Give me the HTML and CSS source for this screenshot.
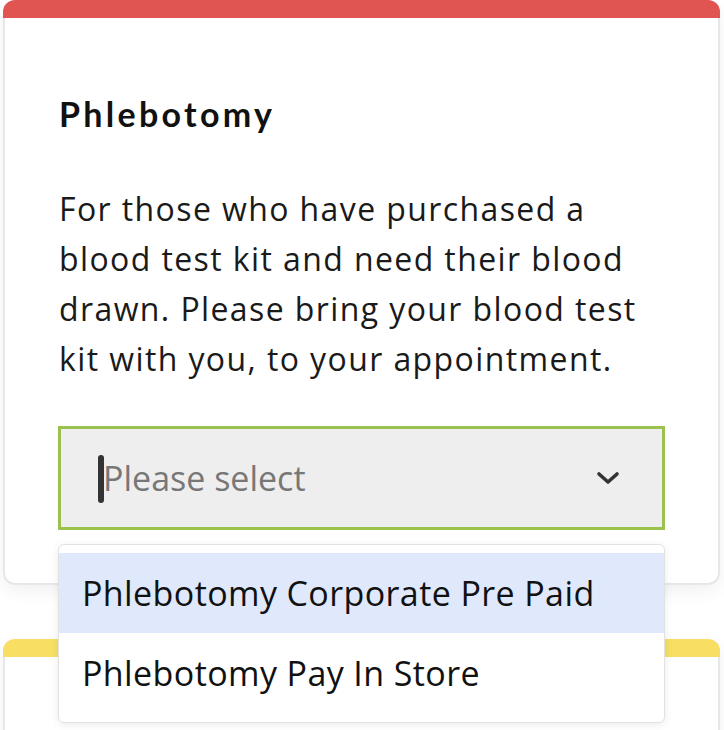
FILE: index.html
```html
<!DOCTYPE html>
<html lang="en">
<head>
<meta charset="utf-8">
<title>Phlebotomy</title>
<link rel="stylesheet" href="styles.css">
</head>
<body>
<div class="page">
  <section class="card">
    <div class="card-bar red"></div>
    <div class="card-body">
      <h2 class="card-title">Phlebotomy</h2>
      <p class="card-text">For those who have purchased a blood test kit and need their blood drawn. Please bring your blood test kit with you, to your appointment.</p>
      <div class="select-wrap">
        <div class="select">
          <span class="caret"></span>
          <span class="placeholder">Please select</span>
          <svg class="chevron" width="24" height="14" viewBox="0 0 24 14"><polyline points="3,3 12,11 21,3" fill="none" stroke="#333" stroke-width="3.6" stroke-linecap="round" stroke-linejoin="round"/></svg>
        </div>
        <ul class="menu">
          <li class="option active">Phlebotomy Corporate Pre Paid</li>
          <li class="option">Phlebotomy Pay In Store</li>
        </ul>
      </div>
    </div>
  </section>
  <section class="card card-next">
    <div class="card-bar yellow"></div>
  </section>
</div>
</body>
</html>
```
FILE: styles.css
```css
html, body {
  margin: 0;
  padding: 0;
  background: #ffffff;
}
body {
  font-family: "Open Sans", "Noto Sans", sans-serif;
  color: #111;
  overflow: hidden;
  height: 730px;
}
.page {
  display: flex;
  flex-direction: column;
  gap: 54px;
  padding: 0 4px 0 3px;
}
.card {
  background: #fff;
  border: 2px solid #e6e7eb;
  border-top: 0;
  border-radius: 12px;
  box-shadow: 0 6px 18px rgba(0, 0, 0, 0.06);
  position: relative;
}
.card-bar {
  height: 18px;
  margin: 0 -2px;
  border-radius: 12px 12px 0 0;
}
.red { background: #e05551; }
.yellow { background: #f8df64; }
.card-body {
  padding: 74px 53px 53px 53px;
}
.card-title {
  margin: 0;
  padding-left: 1px;
  font-family: "Lato", "Noto Sans", sans-serif;
  font-weight: 700;
  font-size: 34px;
  line-height: 44px;
  letter-spacing: 3.3px;
  color: #111;
}
.card-text {
  margin: 48px 0 42px;
  padding-left: 1px;
  font-size: 32px;
  line-height: 50px;
  letter-spacing: 1.4px;
  color: #1a1a1a;
}
.select-wrap {
  position: relative;
}
.select {
  box-sizing: border-box;
  height: 104px;
  border: 3px solid #9bc24f;
  background: #eeeeee;
  display: flex;
  align-items: center;
  padding: 0 42px 0 42px;
  position: relative;
}
.caret {
  position: absolute;
  left: 37px;
  top: 26px;
  width: 6px;
  height: 48px;
  border-radius: 3px;
  background: #333;
}
.placeholder {
  flex: 1;
  font-size: 34px;
  color: #777777;
}
.chevron {
  display: block;
}
.menu {
  position: absolute;
  left: 0;
  right: 0;
  top: 118px;
  margin: 0;
  padding: 8px 0 9px;
  list-style: none;
  background: #fff;
  border: 1px solid #e2e2e2;
  border-radius: 6px;
  box-shadow: 0 2px 8px rgba(0, 0, 0, 0.08);
  z-index: 2;
}
.option {
  height: 80px;
  display: flex;
  align-items: center;
  padding: 0 23px;
  font-size: 34px;
  letter-spacing: 0.4px;
  color: #111;
}
.option.active {
  background: #dfe9fb;
}
.card-next {
  height: 200px;
}
```
